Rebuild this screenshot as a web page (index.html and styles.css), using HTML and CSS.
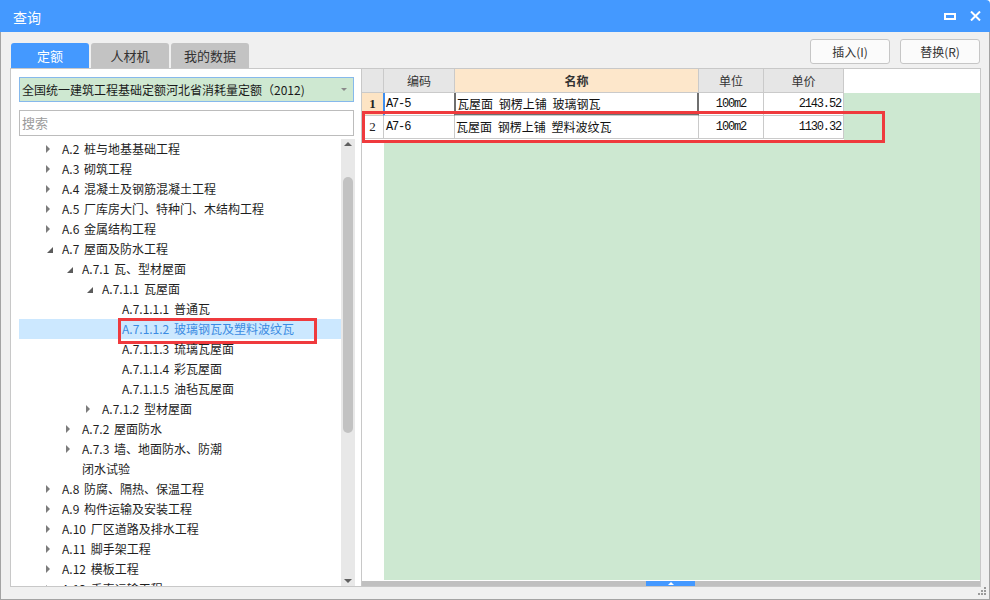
FILE: index.html
```html
<!DOCTYPE html>
<html lang="zh-CN">
<head>
<meta charset="utf-8">
<title>查询</title>
<link rel="stylesheet" href="styles.css">
</head>
<body>
<div class="window">
  <div class="titlebar">
    <span class="title">查询</span>
    <div class="controls">
      <svg class="ic-max" width="12" height="7" viewBox="0 0 12 7"><rect x="1" y="1" width="10" height="5" fill="none" stroke="#fff" stroke-width="2"/></svg>
      <svg class="ic-close" width="11" height="10" viewBox="0 0 11 10"><path d="M1 0.5L10 9.5M10 0.5L1 9.5" stroke="#fff" stroke-width="2"/></svg>
    </div>
  </div>
  <div class="content">
    <div class="toolbar">
      <div class="tabs">
        <div class="tab active">定额</div>
        <div class="tab">人材机</div>
        <div class="tab">我的数据</div>
      </div>
      <div class="buttons">
        <div class="btn">插入(I)</div>
        <div class="btn">替换(R)</div>
      </div>
    </div>
    <div class="main">
      <div class="left">
        <div class="combo"><span class="combo-text">全国统一建筑工程基础定额河北省消耗量定额（2012)</span><i class="combo-arrow"></i></div>
        <div class="search">搜索</div>
        <div class="tree-wrap">
          <div class="tree">
            <div class="node l0"><i class="tw tw-col"></i><span>A.2 桩与地基基础工程</span></div>
            <div class="node l0"><i class="tw tw-col"></i><span>A.3 砌筑工程</span></div>
            <div class="node l0"><i class="tw tw-col"></i><span>A.4 混凝土及钢筋混凝土工程</span></div>
            <div class="node l0"><i class="tw tw-col"></i><span>A.5 厂库房大门、特种门、木结构工程</span></div>
            <div class="node l0"><i class="tw tw-col"></i><span>A.6 金属结构工程</span></div>
            <div class="node l0"><i class="tw tw-exp"></i><span>A.7 屋面及防水工程</span></div>
            <div class="node l1"><i class="tw tw-exp"></i><span>A.7.1 瓦、型材屋面</span></div>
            <div class="node l2"><i class="tw tw-exp"></i><span>A.7.1.1 瓦屋面</span></div>
            <div class="node l3"><i class="tw"></i><span>A.7.1.1.1 普通瓦</span></div>
            <div class="node l3 selected"><i class="tw"></i><span>A.7.1.1.2 玻璃钢瓦及塑料波纹瓦</span><div class="mark-left"></div></div>
            <div class="node l3"><i class="tw"></i><span>A.7.1.1.3 琉璃瓦屋面</span></div>
            <div class="node l3"><i class="tw"></i><span>A.7.1.1.4 彩瓦屋面</span></div>
            <div class="node l3"><i class="tw"></i><span>A.7.1.1.5 油毡瓦屋面</span></div>
            <div class="node l2"><i class="tw tw-col"></i><span>A.7.1.2 型材屋面</span></div>
            <div class="node l1"><i class="tw tw-col"></i><span>A.7.2 屋面防水</span></div>
            <div class="node l1 wrap"><i class="tw tw-col"></i><span>A.7.3 墙、地面防水、防潮<br>闭水试验</span></div>
            <div class="node l0"><i class="tw tw-col"></i><span>A.8 防腐、隔热、保温工程</span></div>
            <div class="node l0"><i class="tw tw-col"></i><span>A.9 构件运输及安装工程</span></div>
            <div class="node l0"><i class="tw tw-col"></i><span>A.10 厂区道路及排水工程</span></div>
            <div class="node l0"><i class="tw tw-col"></i><span>A.11 脚手架工程</span></div>
            <div class="node l0"><i class="tw tw-col"></i><span>A.12 模板工程</span></div>
            <div class="node l0"><i class="tw tw-col"></i><span>A.13 垂直运输工程</span></div>
          </div>
          <div class="vscroll"><i class="up"></i><div class="thumb"></div><i class="down"></i></div>
        </div>
      </div>
      <div class="right">
        <div class="grid">
          <div class="c hd"></div>
          <div class="c hd ctr">编码</div>
          <div class="c hd ctr name-hd">名称</div>
          <div class="c hd ctr">单位</div>
          <div class="c hd ctr">单价</div>
          <div class="c hd-blank"></div>

          <div class="c rn rn-cur">1</div>
          <div class="c code code-cur">A7-5</div>
          <div class="c name name-cur">瓦屋面 钢楞上铺 玻璃钢瓦</div>
          <div class="c num ctr">100m2</div>
          <div class="c num rt">2143.52</div>
          <div class="c body-blank"></div>

          <div class="c rn">2</div>
          <div class="c code">A7-6</div>
          <div class="c name">瓦屋面 钢楞上铺 塑料波纹瓦</div>
          <div class="c num ctr">100m2</div>
          <div class="c num rt">1130.32</div>
          <div class="c body-blank"></div>
        </div>
        <div class="gap"><div class="gap-white"></div><div class="gap-green"></div></div>
        <div class="filler"><div class="filler-rn"></div><div class="filler-green"></div></div>
        <div class="gap1"></div>
        <div class="hscroll"><div class="hthumb"><i></i></div></div>
        <div class="mark-right"></div>
      </div>
    </div>
  </div>
  <svg class="grip" width="9" height="9" viewBox="0 0 9 9">
    <rect x="6" y="0" width="2" height="2" fill="#9a9a9a"/>
    <rect x="3" y="3" width="2" height="2" fill="#9a9a9a"/>
    <rect x="6" y="3" width="2" height="2" fill="#9a9a9a"/>
    <rect x="0" y="6" width="2" height="2" fill="#9a9a9a"/>
    <rect x="3" y="6" width="2" height="2" fill="#9a9a9a"/>
    <rect x="6" y="6" width="2" height="2" fill="#9a9a9a"/>
  </svg>
</div>
</body>
</html>
```

FILE: styles.css
```css
* { box-sizing: border-box; }
html, body { margin: 0; padding: 0; }
body {
  width: 990px;
  height: 600px;
  overflow: hidden;
  background: #ffffff;
  font-family: "Noto Sans CJK SC", "Microsoft YaHei", sans-serif;
  font-size: 12px;
  color: #1e1e1e;
}
.window {
  position: relative;
  width: 990px;
  height: 600px;
  display: flex;
  flex-direction: column;
}
.titlebar {
  height: 32px;
  flex: none;
  background: #4499ff;
  color: #fff;
  display: flex;
  align-items: center;
  padding: 2px 9px 0 13px;
  border-top-right-radius: 4px;
}
.title { font-size: 14px; flex: 1; line-height: 20px; }
.controls { display: flex; align-items: center; gap: 14px; margin-top: -2px; }
.ic-max, .ic-close { display: block; }

.content {
  flex: 1;
  background: #f0f0f0;
  border: 1px solid #a3a3a3;
  border-top: none;
  padding: 0 8px 0 9px;
  display: flex;
  flex-direction: column;
}
.toolbar {
  height: 36px;
  flex: none;
  display: flex;
  justify-content: space-between;
}
.tabs { display: flex; gap: 2px; align-self: flex-end; padding-left: 1px; }
.tab {
  width: 78px;
  height: 25px;
  background: #c3c3c3;
  color: #333;
  font-size: 13px;
  line-height: 25px;
  text-align: center;
  border-radius: 3px 3px 0 0;
}
.tab.active { background: #4499ff; color: #fff; }
.buttons { display: flex; gap: 10px; margin-top: 7px; margin-right: 1px; }
.btn {
  width: 80px;
  height: 25px;
  background: #fbfbfb;
  border: 1px solid #c6c6c6;
  border-radius: 3px;
  font-size: 12px;
  line-height: 23px;
  text-align: center;
  color: #333;
}

.main {
  height: 519px;
  flex: none;
  display: flex;
  border: 1px solid #c8c8c8;
  background: #fff;
}
.left {
  width: 351px;
  flex: none;
  border-right: 1px solid #c8c8c8;
  padding: 8px 0 0 8px;
  display: flex;
  flex-direction: column;
}
.combo {
  width: 335px;
  height: 25px;
  background: #cee8d1;
  border: 1px solid #86b9ec;
  display: flex;
  align-items: center;
  padding-left: 2px;
}
.combo-text { flex: 1; line-height: 22px; color: #1a1a1a; }
.combo-arrow {
  width: 0; height: 0;
  border-left: 3px solid transparent;
  border-right: 3px solid transparent;
  border-top: 3px solid #8a8a8a;
  margin-right: 6px;
}
.search {
  width: 335px;
  height: 26px;
  margin-top: 8px;
  border: 1px solid #bcbcbc;
  background: #fff;
  color: #9b9b9b;
  font-size: 13px;
  line-height: 24px;
  padding-left: 2px;
}
.tree-wrap {
  margin-top: 3px;
  flex: 1;
  display: flex;
  overflow: hidden;
}
.tree { width: 322px; overflow: hidden; }
.node {
  position: relative;
  height: 20px;
  display: flex;
  align-items: flex-start;
  line-height: 20px;
  white-space: nowrap;
  word-spacing: 2px;
  color: #1e1e1e;
}
.node.wrap { height: 40px; }
.node.l0 { padding-left: 27px; }
.node.l1 { padding-left: 47px; }
.node.l2 { padding-left: 67px; }
.node.l3 { padding-left: 87px; }
.tw { display: block; width: 16px; height: 20px; flex: none; position: relative; }
.tw-col::before {
  content: "";
  position: absolute;
  left: 0; top: 6px;
  border-left: 4px solid #7c7c7c;
  border-top: 4px solid transparent;
  border-bottom: 4px solid transparent;
}
.tw-exp::before {
  content: "";
  position: absolute;
  left: 1px; top: 8px;
  border-bottom: 6px solid #5c5c5c;
  border-left: 6px solid transparent;
}
.node.selected { background: #cce8ff; color: #3b8be2; }
.mark-left {
  position: absolute;
  left: 99px;
  top: -1px;
  width: 199px;
  height: 26px;
  border: 3px solid #ef3a3d;
}
.vscroll {
  width: 14px;
  flex: none;
  background: #e8e8e8;
  display: flex;
  flex-direction: column;
  align-items: center;
  padding: 3px 0;
}
.vscroll .up {
  width: 0; height: 0;
  border-left: 4px solid transparent;
  border-right: 4px solid transparent;
  border-bottom: 4px solid #5f5f5f;
}
.vscroll .thumb {
  width: 10px;
  height: 256px;
  margin-top: 31px;
  background: #c2c2c2;
  border-radius: 5px;
}
.vscroll .down {
  margin-top: auto;
  width: 0; height: 0;
  border-left: 4px solid transparent;
  border-right: 4px solid transparent;
  border-top: 4px solid #5f5f5f;
}

.right {
  position: relative;
  flex: 1;
  display: flex;
  flex-direction: column;
}
.grid {
  display: grid;
  grid-template-columns: 22px 71px 244px 65px 80px 1fr;
  grid-template-rows: 24px 23px 23px;
}
.c {
  border-right: 1px solid #cacaca;
  border-bottom: 1px solid #cacaca;
  white-space: nowrap;
  overflow: hidden;
}
.hd { background: #e6e6e6; color: #333; line-height: 23px; font-size: 12px; }
.hd.name-hd { background: #fde7cb; font-weight: bold; }
.hd-blank { background: #fff; border-right: none; border-bottom: none; }
.body-blank { background: #cde8d1; border-right: none; border-bottom: none; }
.ctr { text-align: center; }
.rt { text-align: right; padding-right: 2px; }
.rn {
  font-family: "Liberation Serif", serif;
  font-size: 13px;
  line-height: 22px;
  text-align: center;
  color: #222;
}
.rn-cur { background: #fde4c4; font-weight: bold; border-right-color: #3d8ef0; }
.code, .num {
  font-family: "Liberation Mono", monospace;
  font-size: 12px;
  letter-spacing: -1.15px;
  line-height: 22px;
  color: #111;
}
.code { padding-left: 2px; }
.code-cur { box-shadow: inset 1px 0 #3d8ef0; border-right-color: #6f6f6f; }
.name {
  font-size: 12px;
  line-height: 22px;
  word-spacing: 3px;
  padding-left: 1px;
  color: #111;
}
.name-cur {
  padding-left: 2px;
  border-right-color: #6f6f6f;
  box-shadow: inset 1px 0 #6f6f6f, inset -1px 0 #6f6f6f, inset 0 -2px #6f6f6f;
}
.gap { height: 4px; flex: none; display: flex; }
.gap-white { width: 482px; flex: none; background: #fff; }
.gap-green { flex: 1; background: #cde8d1; }
.filler { height: 437px; flex: none; display: flex; }
.filler-rn { width: 22px; flex: none; background: #fff; }
.filler-green { flex: 1; background: #cde8d1; }
.gap1 { height: 1px; flex: none; }
.hscroll { height: 5px; flex: none; background: #c0c0c0; position: relative; }
.hthumb {
  position: absolute;
  left: 284px;
  top: 0;
  width: 49px;
  height: 5px;
  background: #4499ff;
  display: flex;
  justify-content: center;
  align-items: center;
}
.hthumb i {
  width: 0; height: 0;
  border-left: 3px solid transparent;
  border-right: 3px solid transparent;
  border-bottom: 3px solid #fff;
}
.mark-right {
  position: absolute;
  left: 0;
  top: 42px;
  width: 523px;
  height: 32px;
  border: 3px solid #ef3a3d;
}
.grip { position: absolute; right: 3px; bottom: 4px; }
```
